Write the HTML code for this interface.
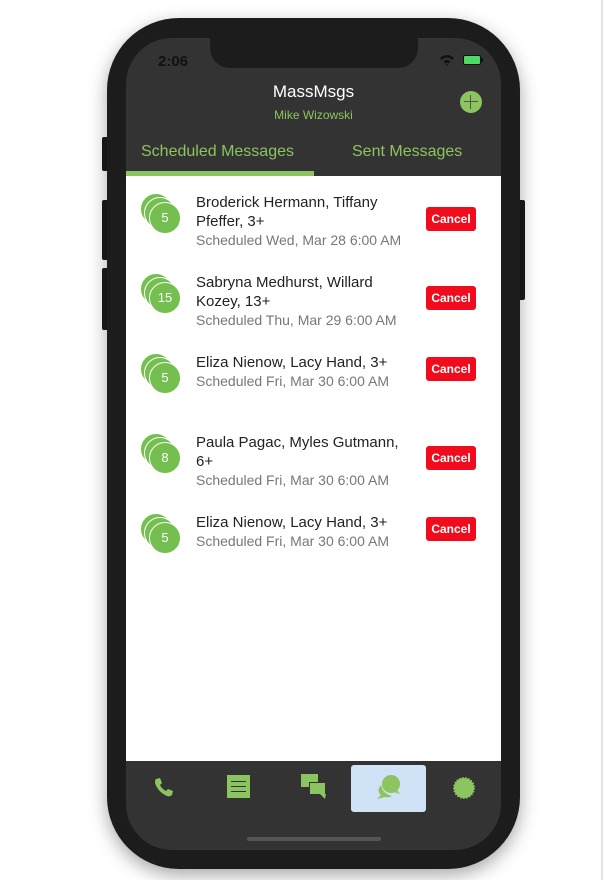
<!DOCTYPE html>
<html><head><style>
*{margin:0;padding:0;box-sizing:border-box}
body{width:605px;height:880px;background:#fff;position:relative;overflow:hidden;font-family:"Liberation Sans",sans-serif}
.abs{position:absolute}
.phone{left:107px;top:18px;width:413px;height:851px;background:#1c1c1c;border-radius:72px;box-shadow:0 6px 18px rgba(0,0,0,.35)}
.screen{left:126px;top:38px;width:375px;height:812px;background:#333;border-radius:46px;overflow:hidden}
.btn{background:#1c1c1c;border-radius:2px}
.name{font-size:15px;color:#222;line-height:19px;width:215px}
.date{font-size:14px;color:#777;line-height:18px}
.c{position:absolute;width:32px;height:32px;border-radius:50%;background:#74bf4f;border:1px solid #fff;color:#fff;font-size:13px;text-align:center;line-height:30px}
.cancel{position:absolute;left:300px;width:50px;height:24px;background:#f00c1d;color:#fff;font-size:12px;font-weight:bold;text-align:center;line-height:24px;border-radius:3px}
</style></head><body>
<div class="abs" style="left:601px;top:0;width:2px;height:880px;background:#e4e4e4"></div>
<div class="abs btn" style="left:102px;top:137px;width:6px;height:34px"></div>
<div class="abs btn" style="left:102px;top:200px;width:6px;height:60px"></div>
<div class="abs btn" style="left:102px;top:268px;width:6px;height:62px"></div>
<div class="abs btn" style="left:518px;top:200px;width:7px;height:100px"></div>
<div class="abs phone"></div>
<div class="abs screen">
  <div class="abs" style="left:84px;top:-2px;width:208px;height:32px;background:#1c1c1c;border-radius:0 0 20px 20px"></div>
  <div class="abs" style="left:32px;top:15px;font-size:15px;font-weight:bold;color:#111">2:06</div>
  <svg class="abs" style="left:313px;top:16px" width="16" height="12" viewBox="0 0 16 12"><path d="M1 4 Q8 -2 15 4 L13 6 Q8 1 3 6Z M4.5 7.5 Q8 4 11.5 7.5 L9.5 9.5 Q8 8 6.5 9.5Z M8 12 L6.8 10.8 Q8 9.8 9.2 10.8Z" fill="#111"/></svg>
  <div class="abs" style="left:337px;top:17px;width:18px;height:10px;border:1px solid #111;border-radius:2px;background:#4cd964"></div>
  <div class="abs" style="left:355px;top:20px;width:2px;height:4px;background:#111"></div>
  <div class="abs" style="left:0;top:44px;width:375px;text-align:center;color:#fff;font-size:17px">MassMsgs</div>
  <div class="abs" style="left:0;top:70px;width:375px;text-align:center;color:#8cc45f;font-size:12px">Mike Wizowski</div>
  <div class="abs" style="left:334px;top:53px;width:22px;height:22px;border-radius:50%;background:#8cc45f"></div>
  <div class="abs" style="left:344px;top:57px;width:1px;height:14px;background:#555"></div>
  <div class="abs" style="left:338px;top:63px;width:14px;height:1px;background:#555"></div>
  <div class="abs" style="left:15px;top:105px;color:#8cc45f;font-size:16px">Scheduled Messages</div>
  <div class="abs" style="left:226px;top:105px;color:#8cc45f;font-size:16px">Sent Messages</div>
  <div class="abs" style="left:0;top:133px;width:188px;height:5px;background:#8cc45f"></div>
  <div class="abs" style="left:0;top:138px;width:375px;height:585px;background:#fff">
    <div class="abs" style="left:0;top:17px;width:375px">
      <div class="c" style="left:14px;top:0"></div><div class="c" style="left:18px;top:4px"></div><div class="c" style="left:23px;top:9px">5</div>
      <div class="abs name" style="left:70px;top:0px">Broderick Hermann, Tiffany Pfeffer, 3+</div>
      <div class="abs date" style="left:70px;top:38px">Scheduled Wed, Mar 28 6:00 AM</div>
      <div class="cancel" style="top:14px">Cancel</div>
    </div>
    <div class="abs" style="left:0;top:97px;width:375px">
      <div class="c" style="left:14px;top:0"></div><div class="c" style="left:18px;top:4px"></div><div class="c" style="left:23px;top:9px">15</div>
      <div class="abs name" style="left:70px;top:0px">Sabryna Medhurst, Willard Kozey, 13+</div>
      <div class="abs date" style="left:70px;top:38px">Scheduled Thu, Mar 29 6:00 AM</div>
      <div class="cancel" style="top:13px">Cancel</div>
    </div>
    <div class="abs" style="left:0;top:177px;width:375px">
      <div class="c" style="left:14px;top:0"></div><div class="c" style="left:18px;top:4px"></div><div class="c" style="left:23px;top:9px">5</div>
      <div class="abs name" style="left:70px;top:0px">Eliza Nienow, Lacy Hand, 3+</div>
      <div class="abs date" style="left:70px;top:19px">Scheduled Fri, Mar 30 6:00 AM</div>
      <div class="cancel" style="top:4px">Cancel</div>
    </div>
    <div class="abs" style="left:0;top:257px;width:375px">
      <div class="c" style="left:14px;top:0"></div><div class="c" style="left:18px;top:4px"></div><div class="c" style="left:23px;top:9px">8</div>
      <div class="abs name" style="left:70px;top:0px">Paula Pagac, Myles Gutmann, 6+</div>
      <div class="abs date" style="left:70px;top:38px">Scheduled Fri, Mar 30 6:00 AM</div>
      <div class="cancel" style="top:13px">Cancel</div>
    </div>
    <div class="abs" style="left:0;top:337px;width:375px">
      <div class="c" style="left:14px;top:0"></div><div class="c" style="left:18px;top:4px"></div><div class="c" style="left:23px;top:9px">5</div>
      <div class="abs name" style="left:70px;top:0px">Eliza Nienow, Lacy Hand, 3+</div>
      <div class="abs date" style="left:70px;top:19px">Scheduled Fri, Mar 30 6:00 AM</div>
      <div class="cancel" style="top:4px">Cancel</div>
    </div>
  </div>
  <div class="abs" style="left:225px;top:727px;width:75px;height:47px;background:#cfe2f6;border-radius:3px"></div>
  <svg class="abs" style="left:26px;top:738px" width="24" height="24" viewBox="0 0 24 24"><path d="M4 3 L8 2 L10 7 L8 9 Q10 13 14 15 L16 13 L21 15 L20 19 Q18 21 15 20 Q6 16 3 7 Q3 4 4 3Z" fill="#8cc45f"/></svg>
  <div class="abs" style="left:101px;top:737px;width:23px;height:23px;background:#8cc45f"></div>
  <div class="abs" style="left:105px;top:743px;width:15px;height:1px;background:#333;box-shadow:0 5px 0 #333,0 10px 0 #333"></div>
  <div class="abs" style="left:175px;top:736px;width:17px;height:13px;background:#8cc45f"></div>
  <div class="abs" style="left:183px;top:744px;width:17px;height:13px;background:#8cc45f;border:1px solid #333"></div>
  <svg class="abs" style="left:194px;top:756px" width="6" height="5"><path d="M0 0 L6 0 L5 5Z" fill="#8cc45f"/></svg>
  <svg class="abs" style="left:249px;top:735px" width="28" height="28" viewBox="0 0 28 28"><circle cx="16" cy="11" r="9" fill="#8cc45f"/><path d="M22 17 L25 21 L19 19Z" fill="#8cc45f"/><path d="M6 12 Q1 18 6 22 L2 26 L10 24 Q14 25 17 23 Q8 21 6 12Z" fill="#8cc45f"/></svg>
  <svg class="abs" style="left:326px;top:738px" width="24" height="24" viewBox="0 0 24 24"><circle cx="12" cy="12" r="10" fill="#8cc45f" stroke="#8cc45f" stroke-width="2" stroke-dasharray="1.5 1.5"/></svg>
  <div class="abs" style="left:121px;top:799px;width:134px;height:4px;background:#555;border-radius:2px"></div>
</div>
</body></html>
